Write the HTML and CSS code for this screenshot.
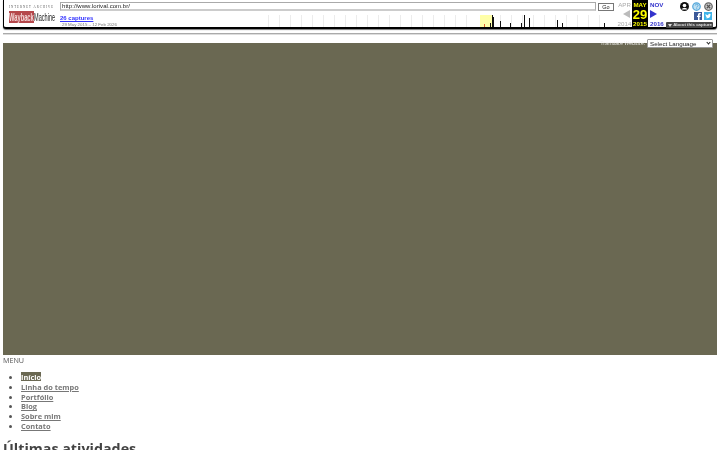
FILE: index.html
```html
<!DOCTYPE html>
<html lang="pt">
<head>
<meta charset="utf-8">
<title>Lorival</title>
<link rel="stylesheet" href="styles.css">
</head>
<body>
<div class="wm-bar">
  <div class="wm-logo">
    <div class="wm-ia">INTERNET ARCHIVE</div>
    <div class="wm-mark"><div class="wm-way"><span class="wm-way-text">Wayback</span></div><div class="wm-machine"><span class="wm-machine-text">Machine</span></div></div>
  </div>
  <div class="wm-main">
    <div class="wm-url-row">
      <div class="wm-url">http://www.lorival.com.br/</div>
      <div class="wm-go">Go</div>
    </div>
    <div class="wm-lower">
      <div class="wm-caps">
        <a class="wm-count" href="#">26 captures</a>
        <div class="wm-range">29 May 2015 – 12 Feb 2026</div>
      </div>
      <svg class="wm-chart" width="347" height="12" viewBox="0 0 347 12">
        <g fill="#ececec">
          <rect x="0" y="0" width="1" height="12"/><rect x="11" y="0" width="1" height="12"/><rect x="22" y="0" width="1" height="12"/><rect x="33" y="0" width="1" height="12"/><rect x="44" y="0" width="1" height="12"/><rect x="55" y="0" width="1" height="12"/><rect x="66" y="0" width="1" height="12"/><rect x="77" y="0" width="1" height="12"/><rect x="88" y="0" width="1" height="12"/><rect x="99" y="0" width="1" height="12"/><rect x="110" y="0" width="1" height="12"/><rect x="121" y="0" width="1" height="12"/><rect x="132" y="0" width="1" height="12"/><rect x="143" y="0" width="1" height="12"/><rect x="154" y="0" width="1" height="12"/><rect x="165" y="0" width="1" height="12"/><rect x="176" y="0" width="1" height="12"/><rect x="187" y="0" width="1" height="12"/><rect x="198" y="0" width="1" height="12"/><rect x="232" y="0" width="1" height="12"/><rect x="243" y="0" width="1" height="12"/><rect x="254" y="0" width="1" height="12"/><rect x="265" y="0" width="1" height="12"/><rect x="276" y="0" width="1" height="12"/><rect x="287" y="0" width="1" height="12"/><rect x="298" y="0" width="1" height="12"/><rect x="309" y="0" width="1" height="12"/><rect x="320" y="0" width="1" height="12"/><rect x="331" y="0" width="1" height="12"/>
        </g>
        <rect x="212" y="0" width="12" height="12" fill="#ffffa8"/>
        <g fill="#111">
          <rect x="216" y="9" width="1" height="3" fill="#e06030"/><rect x="222" y="8" width="1" height="4"/><rect x="224" y="0" width="1" height="12"/><rect x="225" y="2" width="1" height="10"/><rect x="232" y="6" width="1" height="6"/><rect x="242" y="8" width="1" height="4"/><rect x="253" y="8" width="1" height="4"/><rect x="256" y="0" width="1" height="12"/><rect x="261" y="3" width="1" height="9"/><rect x="289" y="5" width="1" height="7"/><rect x="294" y="8" width="1" height="4"/><rect x="336" y="8" width="1" height="4"/>
        </g>
      </svg>
    </div>
  </div>
  <div class="wm-cal">
    <div class="wm-col">
      <span class="wm-mo wm-off">APR</span>
      <span class="wm-tri wm-tri-l"></span>
      <span class="wm-yr wm-off">2014</span>
    </div>
    <div class="wm-col wm-now">
      <span class="wm-mo">MAY</span>
      <span class="wm-day">29</span>
      <span class="wm-yr">2015</span>
    </div>
    <div class="wm-col wm-next">
      <span class="wm-mo">NOV</span>
      <span class="wm-tri wm-tri-r"></span>
      <span class="wm-yr">2016</span>
    </div>
  </div>
  <div class="wm-tools">
    <div class="wm-icons">
      <svg width="9" height="9" viewBox="0 0 18 18"><circle cx="9" cy="9" r="9" fill="#111"/><circle cx="9" cy="7" r="3.6" fill="#fff"/><path d="M3 15c1-4 11-4 12 0z" fill="#fff"/></svg>
      <svg width="9" height="9" viewBox="0 0 18 18"><circle cx="9" cy="9" r="7.5" fill="#bfe0f2" stroke="#58a9dc" stroke-width="2.5"/><path d="M6.500 7c0-3.500 5.500-3.500 5.500 0 0 2-2.600 2-2.600 4M9.400 12.500v2" fill="none" stroke="#58a9dc" stroke-width="2"/></svg>
      <svg width="9" height="9" viewBox="0 0 18 18"><circle cx="9" cy="9" r="7.5" fill="#ccc" stroke="#666" stroke-width="2.500"/><path d="M5.500 5.500l7 7M12.500 5.500l-7 7" stroke="#555" stroke-width="2.400"/></svg>
    </div>
    <div class="wm-social">
      <svg width="8" height="8" viewBox="0 0 16 16"><rect width="16" height="16" fill="#3b5998"/><path d="M11 16V10h2l.4-2.500H11V6c0-1 .4-1.500 1.500-1.500h1V2.200C12.800 2 12 2 11.300 2 9.300 2 8 3.200 8 5.500v2H6V10h2v6z" fill="#fff"/></svg>
      <svg width="8" height="8" viewBox="0 0 16 16"><rect width="16" height="16" fill="#3fb4ea"/><path d="M3 11.500c4 2.500 10 .5 9.800-5.500l1.200-1.300-1.500.3.900-1.300-1.400.6C11 3 8 4 8.700 6.500 6.500 6.400 4.700 5.400 3.400 3.800c-.7 1.200-.3 2.700.8 3.400l-1.100-.3c0 1.200.8 2.200 2 2.500l-1.100 0c.3 1 1.200 1.700 2.300 1.700-1 .7-2.100.9-3.300.4z" fill="#fff"/></svg>
    </div>
    <div class="wm-about"><span class="wm-about-tri"></span>About this capture</div>
  </div>
</div>
<div class="wm-rule"></div>
<div class="hero">
  <div class="translate">
    <span class="translate-label">Translate Website:</span>
    <div class="select-wrap">
      <select class="translate-select"><option>Select Language</option></select>
    </div>
  </div>
</div>
<div class="menu-label">MENU</div>
<ul class="nav">
  <li><a class="nav-link nav-current" href="#">Início</a></li>
  <li><a class="nav-link" href="#">Linha do tempo</a></li>
  <li><a class="nav-link" href="#">Portfólio</a></li>
  <li><a class="nav-link" href="#">Blog</a></li>
  <li><a class="nav-link" href="#">Sobre mim</a></li>
  <li><a class="nav-link" href="#">Contato</a></li>
</ul>
<h2 class="latest">Últimas atividades</h2>
</body>
</html>
```
FILE: styles.css
```css
html, body {
  margin: 0;
  padding: 0;
  height: 450px;
  overflow: hidden;
  background: #fff;
}
body {
  font-family: "Open Sans", sans-serif;
  color: #555;
  padding: 0 3px;
  filter: blur(0.35px);
}
.wm-bar {
  display: flex;
  height: 27px;
  background: #fff;
  border: 1px solid #000;
  border-top: 0;
  border-bottom-width: 2px;
  border-radius: 0 0 3px 3px;
  box-shadow: 0 1px 1px #777;
  font-family: "Liberation Sans", sans-serif;
}
.wm-logo {
  width: 56px;
  flex: none;
  padding: 5px 0 0 5px;
  box-sizing: border-box;
}
.wm-ia {
  font-size: 3px;
  letter-spacing: 1.03px;
  color: #555;
  font-family: "Liberation Serif", serif;
  line-height: 4px;
  white-space: nowrap;
}
.wm-mark {
  display: flex;
  margin-top: 2px;
  height: 12px;
  white-space: nowrap;
}
.wm-way {
  width: 25px;
  flex: none;
  background: #b5474b;
  overflow: hidden;
}
.wm-way-text {
  display: block;
  color: #f3d9d9;
  font-size: 9px;
  line-height: 12px;
  font-weight: bold;
  transform-origin: 0 50%;
  transform: scale(.64, 1.3);
}
.wm-machine {
  width: 21px;
  flex: none;
  overflow: hidden;
}
.wm-machine-text {
  display: block;
  color: #222;
  font-size: 9px;
  line-height: 12px;
  transform-origin: 0 50%;
  transform: scale(.62, 1.3);
}
.wm-main {
  width: 556px;
  flex: none;
  display: flex;
  flex-direction: column;
}
.wm-url-row {
  display: flex;
  align-items: flex-start;
  gap: 2px;
  padding-top: 2px;
}
.wm-url {
  width: 533px;
  height: 6px;
  border: 1px solid #aaa;
  border-bottom: 2px solid #ccc;
  font-size: 6px;
  line-height: 7px;
  padding-left: 1px;
  color: #222;
  letter-spacing: .05px;
  background: #fff;
}
.wm-go {
  width: 14px;
  height: 6px;
  margin-top: 1px;
  border: 1px solid #777;
  font-size: 5.500px;
  line-height: 6px;
  text-align: center;
  color: #222;
}
.wm-lower {
  display: flex;
  justify-content: space-between;
  padding-right: 1px;
  margin-top: 4px;
}
.wm-count {
  display: block;
  color: #33f;
  font-size: 6px;
  font-weight: bold;
  line-height: 7px;
  text-decoration: underline;
}
.wm-range {
  color: #777;
  font-size: 4.400px;
  line-height: 6px;
  padding-left: 2px;
}
.wm-chart {
  display: block;
}
.wm-cal {
  display: flex;
  width: 49px;
  flex: none;
  font-size: 6.200px;
  line-height: 7px;
  font-weight: bold;
}
.wm-col {
  width: 16px;
  flex: none;
  display: flex;
  flex-direction: column;
  align-items: center;
  justify-content: space-between;
  padding-top: 1px;
  box-sizing: border-box;
}
.wm-mo, .wm-yr {
  height: 7px;
}
.wm-off {
  color: #aaa;
  font-weight: normal;
  margin-left: 1px;
}
.wm-now {
  background: #000;
  color: #ff0;
}
.wm-next {
  color: #33c;
  align-items: flex-start;
  padding-left: 2px;
}
.wm-day {
  font-size: 13px;
  line-height: 11px;
}
.wm-tri {
  width: 0;
  height: 0;
  border-style: solid;
  border-width: 4px 0 4px 0;
  border-color: transparent;
}
.wm-tri-l {
  border-right: 7px solid #bbb;
  margin-left: 4px;
}
.wm-tri-r {
  border-left: 7px solid #33c;
}
.wm-tools {
  flex: 1;
  display: flex;
  flex-direction: column;
  align-items: flex-end;
  padding: 2px 0 0;
}
.wm-icons {
  display: flex;
  gap: 3px;
  padding-right: 3px;
  height: 9px;
}
.wm-social {
  display: flex;
  gap: 2px;
  margin-top: 1px;
  padding-right: 4px;
  height: 8px;
}
.wm-about {
  margin-top: 2px;
  margin-right: 3px;
  height: 6px;
  padding: 0 1px 0 2px;
  background: #444;
  color: #ddd;
  font-size: 4.400px;
  line-height: 6px;
  font-weight: bold;
  white-space: nowrap;
  border-radius: 1px;
  display: flex;
  align-items: center;
  gap: 1px;
}
.wm-about-tri {
  width: 0;
  height: 0;
  border-style: solid;
  border-width: 3px 2px 0 2px;
  border-color: #ddd transparent transparent;
}
.wm-rule {
  height: 1px;
  margin-top: 4px;
  background: #aaa;
  border-bottom: 1px solid #ddd;
}
.hero {
  height: 312px;
  margin-top: 8px;
  background: #6a6852;
  display: flex;
  justify-content: flex-end;
  align-items: flex-start;
  padding-right: 4px;
}
.translate {
  display: flex;
  align-items: center;
  gap: 2px;
  margin-top: -4px;
}
.translate-label {
  color: #f2f2f0;
  font-size: 5.200px;
  line-height: 9px;
}
.select-wrap {
  position: relative;
  width: 66px;
  height: 9px;
}
.select-wrap::after {
  content: "";
  position: absolute;
  right: 3px;
  top: 2px;
  width: 2px;
  height: 2px;
  border-right: 1px solid #222;
  border-bottom: 1px solid #222;
  transform: rotate(45deg);
}
.translate-select {
  display: block;
  width: 66px;
  height: 9px;
  margin: 0;
  padding: 0 0 0 2px;
  box-sizing: border-box;
  appearance: none;
  border: 1px solid #999;
  border-radius: 1px;
  background: #fff;
  color: #222;
  font-family: "Liberation Sans", sans-serif;
  font-size: 6.200px;
  line-height: 7px;
}
.menu-label {
  font-size: 7.200px;
  line-height: 11px;
  color: #555;
}
.nav {
  list-style: disc;
  margin: 7px 0 0;
  padding: 0 0 0 18px;
  color: #555;
}
.nav li {
  font-size: 7.400px;
  line-height: 9.800px;
}
.nav-link {
  color: #777;
  font-weight: 700;
  text-decoration: underline;
}
.nav-current {
  background: #6a6852;
  color: #fff;
}
.latest {
  margin: 6px 0 0;
  font-size: 14.300px;
  line-height: 22px;
  font-weight: 700;
  color: #444;
}
```
